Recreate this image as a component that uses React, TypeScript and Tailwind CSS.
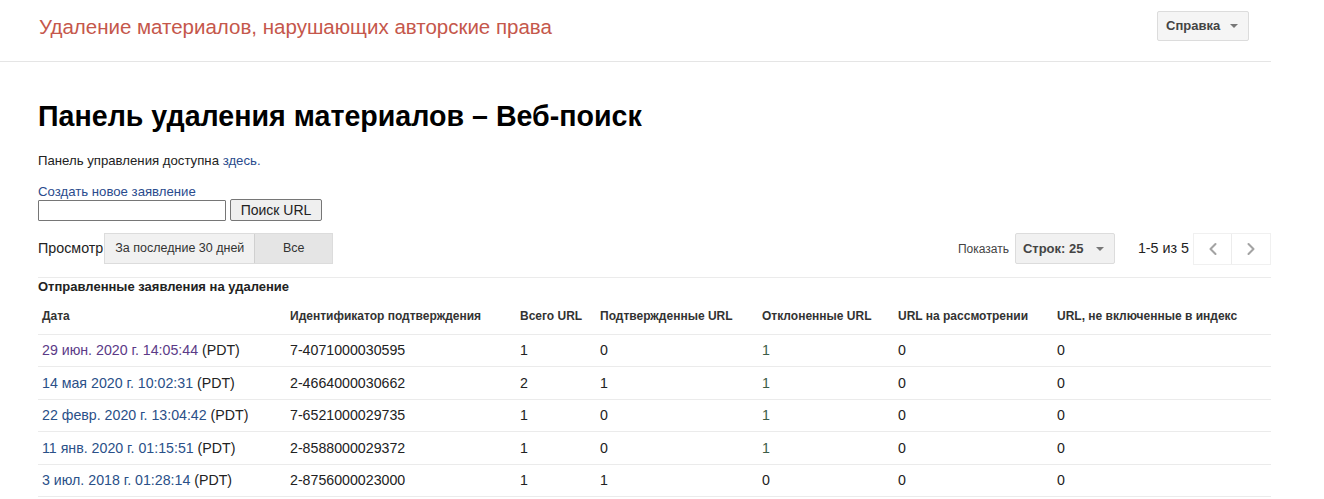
import { ChevronLeft, ChevronRight } from "lucide-react"

const rows = [
  { date: "29 июн. 2020 г. 14:05:44", visited: true, id: "7-4071000030595", total: 1, ok: 0, rejected: 1, pending: 0, notIndexed: 0 },
  { date: "14 мая 2020 г. 10:02:31", visited: false, id: "2-4664000030662", total: 2, ok: 1, rejected: 1, pending: 0, notIndexed: 0 },
  { date: "22 февр. 2020 г. 13:04:42", visited: false, id: "7-6521000029735", total: 1, ok: 0, rejected: 1, pending: 0, notIndexed: 0 },
  { date: "11 янв. 2020 г. 01:15:51", visited: false, id: "2-8588000029372", total: 1, ok: 0, rejected: 1, pending: 0, notIndexed: 0 },
  { date: "3 июл. 2018 г. 01:28:14", visited: false, id: "2-8756000023000", total: 1, ok: 1, rejected: 0, pending: 0, notIndexed: 0 },
]

function Caret() {
  return <span className="inline-block h-0 w-0 border-x-[4px] border-t-[4px] border-x-transparent border-t-[#777]" />
}

export default function App() {
  return (
    <div className="min-h-[499px] bg-white text-[#222] font-['Liberation_Sans',Arial,sans-serif]">
      <div className="w-[1271px]">
        <header className="flex h-[62px] items-center justify-between border-b border-[#e5e5e5] pl-[39px] pr-[22px]">
          <div className="text-[20.5px] text-[#c5574b] -mt-[7px]">Удаление материалов, нарушающих авторские права</div>
          <button className="flex h-[30px] w-[92px] items-center justify-between rounded-[2px] border border-[#dcdcdc] bg-[#f5f5f5] pl-[8px] pr-[10px] text-[13px] font-bold text-[#444] -mt-[9px]">
            Справка
            <Caret />
          </button>
        </header>

        <main className="pl-[38px]">
          <h1 className="mt-[36px] text-[28.6px] font-bold leading-[36px] text-black">Панель удаления материалов – Веб-поиск</h1>
          <p className="mt-[19px] text-[13.2px] leading-[16px]">
            Панель управления доступна <a className="text-[#2a4b8d]">здесь.</a>
          </p>
          <a className="mt-[15px] block text-[13.2px] leading-[16px] text-[#2a4b8d]">Создать новое заявление</a>
          <div className="-mt-[1px] flex items-center gap-[4px]">
            <input className="h-[21px] w-[188px] rounded-[1px] border border-[#767676]" />
            <button className="h-[22px] w-[92px] rounded-[2px] border border-[#767676] bg-[#efefef] text-[14px] leading-[20px]">Поиск URL</button>
          </div>

          <div className="mt-[12px] flex h-[31px] items-center justify-between">
            <div className="flex items-center">
              <span className="text-[14.3px]">Просмотр</span>
              <div className="ml-[1px] flex h-[31px] border border-[#dcdcdc]">
                <button className="w-[149px] bg-[#f1f1f1] text-[12.5px] text-[#333]">За последние 30 дней</button>
                <button className="w-[78px] border-l border-[#d0d0d0] bg-[#e5e5e5] text-[12.5px] text-[#333]">Все</button>
              </div>
            </div>
            <div className="flex items-center">
              <span className="text-[12px] text-[#444]">Показать</span>
              <button className="ml-[6px] flex h-[31px] w-[100px] items-center justify-between rounded-[2px] border border-[#dcdcdc] bg-[#f1f1f1] pl-[7px] pr-[10px] text-[13px] font-bold text-[#444]">
                Строк: 25
                <Caret />
              </button>
              <span className="ml-[23px] text-[14.3px]">1-5 из 5</span>
              <div className="ml-[4px] flex h-[32px] border border-[#f0f0f0]">
                <button className="flex w-[38px] items-center justify-center border-r border-[#ececec] text-[#a3a3a3]">
                  <ChevronLeft size={20} strokeWidth={2.5} />
                </button>
                <button className="flex w-[38px] items-center justify-center text-[#a3a3a3]">
                  <ChevronRight size={20} strokeWidth={2.5} />
                </button>
              </div>
            </div>
          </div>

          <div className="mt-[13px] w-[1233px] border-t border-[#ebebeb]">
            <div className="pt-[1px] text-[13px] font-bold leading-[16px]">Отправленные заявления на удаление</div>
            <table className="w-full table-fixed border-collapse text-left">
              <colgroup>
                <col className="w-[248px]" />
                <col className="w-[230px]" />
                <col className="w-[80px]" />
                <col className="w-[162px]" />
                <col className="w-[136px]" />
                <col className="w-[159px]" />
                <col />
              </colgroup>
              <thead>
                <tr className="h-[39px] border-b border-[#ebebeb] text-[12px] font-bold text-[#333]">
                  <th className="pl-[4px] pt-[3px] font-bold">Дата</th>
                  <th className="pl-[4px] pt-[3px] font-bold">Идентификатор подтверждения</th>
                  <th className="pl-[4px] pt-[3px] font-bold">Всего URL</th>
                  <th className="pl-[4px] pt-[3px] font-bold">Подтвержденные URL</th>
                  <th className="pl-[4px] pt-[3px] font-bold">Отклоненные URL</th>
                  <th className="pl-[4px] pt-[3px] font-bold">URL на рассмотрении</th>
                  <th className="pl-[4px] pt-[3px] font-bold">URL, не включенные в индекс</th>
                </tr>
              </thead>
              <tbody className="text-[14.2px]">
                {rows.map((r) => (
                  <tr key={r.id} className="h-[32.5px] border-b border-[#ebebeb]">
                    <td className="pl-[4px] pt-[1px]">
                      <a className={r.visited ? "text-[#5b3a87]" : "text-[#2a5088]"}>{r.date}</a> (PDT)
                    </td>
                    <td className="pl-[4px] pt-[1px]">{r.id}</td>
                    <td className="pl-[4px] pt-[1px]">{r.total}</td>
                    <td className="pl-[4px] pt-[1px]">{r.ok}</td>
                    <td className={r.rejected ? "pl-[4px] pt-[1px] text-[#3d5c47]" : "pl-[4px] pt-[1px]"}>{r.rejected}</td>
                    <td className="pl-[4px] pt-[1px]">{r.pending}</td>
                    <td className="pl-[4px] pt-[1px]">{r.notIndexed}</td>
                  </tr>
                ))}
              </tbody>
            </table>
          </div>
        </main>
      </div>
    </div>
  )
}
